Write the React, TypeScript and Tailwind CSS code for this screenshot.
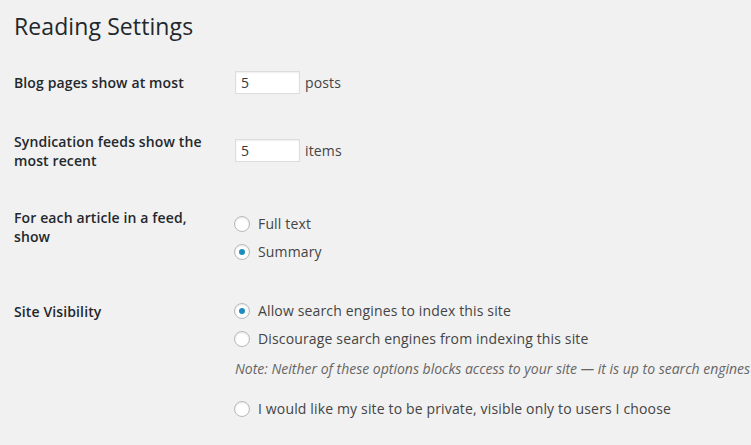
import React from "react";

function Radio({ checked, label }: { checked?: boolean; label: string }) {
  return (
    <div className="flex items-center h-[20px]">
      <span className="relative ml-[-1px] w-[16px] h-[16px] rounded-full border border-[#b4b9be] bg-white shadow-[inset_0_1px_2px_rgba(0,0,0,0.1)] flex items-center justify-center">
        {checked && <span className="w-[6px] h-[6px] rounded-full bg-[#1e8cbe]" />}
      </span>
      <span className="ml-[8px] text-[14px] leading-[20px] tracking-[0.15px] text-[#444]">{label}</span>
    </div>
  );
}

function NumInput({ value }: { value: string }) {
  return (
    <div className="w-[65px] h-[23px] bg-white border border-[#ddd] shadow-[inset_0_1px_2px_rgba(0,0,0,0.07)] pl-[5px] text-[14px] leading-[21px] text-[#32373c]">
      {value}
    </div>
  );
}

export default function App() {
  return (
    <div
      className="w-[751px] h-[445px] overflow-hidden bg-[#f1f1f1] text-[#444]"
      style={{ fontFamily: '"Open Sans", "Noto Sans", sans-serif' }}
    >
      <div className="pl-[14px]">
        <h1 className="pt-[12px] h-[56px] text-[23px] leading-[29px] font-normal tracking-[0.1px] text-[#23282d]">
          Reading Settings
        </h1>

        {/* Row 1 */}
        <div className="flex h-[60px]">
          <div className="w-[221px] pt-[17px] text-[14px] leading-[19px] font-semibold tracking-[0.12px] text-[#23282d]">
            Blog pages show at most
          </div>
          <div className="pt-[15px]">
            <div className="flex items-center">
              <NumInput value="5" />
              <span className="ml-[5px] text-[14px] leading-[19px] tracking-[0.15px]">posts</span>
            </div>
          </div>
        </div>

        {/* Row 2 */}
        <div className="flex h-[74px]">
          <div className="w-[221px] pt-[16px] text-[14px] leading-[19px] font-semibold tracking-[0.12px] text-[#23282d]">
            Syndication feeds show the
            <br />
            most recent
          </div>
          <div className="pt-[23px]">
            <div className="flex items-center">
              <NumInput value="5" />
              <span className="ml-[5px] text-[14px] leading-[19px] tracking-[0.15px]">items</span>
            </div>
          </div>
        </div>

        {/* Row 3 */}
        <div className="flex h-[94px]">
          <div className="w-[221px] pt-[18px] text-[14px] leading-[19px] font-semibold tracking-[0.12px] text-[#23282d]">
            For each article in a feed,
            <br />
            show
          </div>
          <div className="pt-[24px] flex flex-col gap-[8px]">
            <Radio label="Full text" />
            <Radio checked label="Summary" />
          </div>
        </div>

        {/* Row 4 */}
        <div className="flex">
          <div className="w-[221px] shrink-0 pt-[18px] text-[14px] leading-[19px] font-semibold tracking-[0.12px] text-[#23282d]">
            Site Visibility
          </div>
          <div className="pt-[17px] flex flex-col min-w-0">
            <Radio checked label="Allow search engines to index this site" />
            <div className="mt-[8px]">
              <Radio label="Discourage search engines from indexing this site" />
            </div>
            <p className="mt-[10px] text-[14px] leading-[20px] italic text-[#666] whitespace-nowrap">
              Note: Neither of these options blocks access to your site — it is up to search engines to honor this request.
            </p>
            <div className="mt-[20px]">
              <Radio label="I would like my site to be private, visible only to users I choose" />
            </div>
          </div>
        </div>
      </div>
    </div>
  );
}
